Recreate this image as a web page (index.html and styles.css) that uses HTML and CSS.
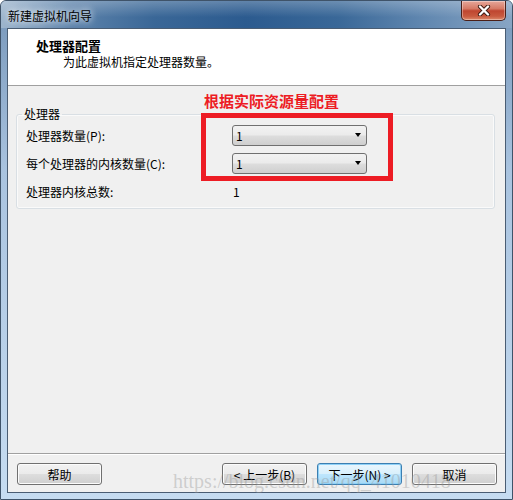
FILE: index.html
```html
<!DOCTYPE html>
<html lang="zh">
<head>
    <meta charset="UTF-8">
    <title>新建虚拟机向导</title>
    <link rel="stylesheet" href="styles.css">
</head>
<body>
    <div class="window">
        <div class="title-bar">
            <span class="title">新建虚拟机向导</span>
            <div class="close-btn">
                <svg width="14" height="11" viewBox="0 0 14 11">
                    <path d="M3 1.5 L11 9.5 M11 1.5 L3 9.5" stroke="#3b1a12" stroke-width="4.2" stroke-linecap="round"/>
                    <path d="M3 1.5 L11 9.5 M11 1.5 L3 9.5" stroke="#ffffff" stroke-width="2.4" stroke-linecap="round"/>
                </svg>
            </div>
        </div>

        <div class="frame">
            <div class="client">
                <div class="header">
                    <div class="header-title">处理器配置</div>
                    <div class="header-sub">为此虚拟机指定处理器数量。</div>
                </div>

                <div class="content">
                    <fieldset class="group">
                        <legend>处理器</legend>
                        <div class="row">
                            <span class="label">处理器数量(P):</span>
                            <div class="combo"><span>1</span><i class="arrow"></i></div>
                        </div>
                        <div class="row">
                            <span class="label">每个处理器的内核数量(C):</span>
                            <div class="combo"><span>1</span><i class="arrow"></i></div>
                        </div>
                        <div class="row">
                            <span class="label">处理器内核总数:</span>
                            <span class="value">1</span>
                        </div>
                    </fieldset>

                    <!-- 截图上的红色标注 -->
                    <div class="note-text">根据实际资源量配置</div>
                    <div class="note-box"></div>
                </div>

                <div class="footer">
                    <button class="btn">帮助</button>
                    <div class="spacer"></div>
                    <button class="btn">&lt; 上一步(B)</button>
                    <button class="btn default">下一步(N) &gt;</button>
                    <button class="btn">取消</button>
                </div>
            </div>
        </div>

        <div class="watermark">https://blog.csdn.net/qq_41010418</div>
    </div>
</body>
</html>
```

FILE: styles.css
```css
body {
    margin: 0;
    font-family: "Noto Sans CJK SC", sans-serif;
    font-size: 12px;
    color: #000;
    background: #fff;
}
.window {
    position: relative;
    width: 513px;
    height: 500px;
    box-sizing: border-box;
    border: 1px solid #3f5369;
    border-radius: 6px 6px 0 0;
    display: flex;
    flex-direction: column;
    overflow: hidden;
    background: linear-gradient(to bottom, #8aa6c4 0%, #a7c1dc 45%, #c3d9ef 100%);
}
.title-bar {
    height: 27px;
    display: flex;
    justify-content: space-between;
    align-items: flex-start;
    padding: 0 6px 0 7px;
    background:
        linear-gradient(to bottom, rgba(255,255,255,0.25), rgba(255,255,255,0) 60%),
        linear-gradient(90deg, #9db5cd 0%, #5d83ab 14%, #3a6797 30%, #2c5b8f 48%, #3a6898 66%, #5f86af 82%, #88a5c4 100%);
}
.title {
    line-height: 28px;
    padding-top: 1px;
    font-size: 12px;
    color: #000;
    text-shadow: 0 0 6px rgba(255,255,255,0.9), 0 0 10px rgba(255,255,255,0.7);
}
.close-btn {
    width: 43px;
    height: 19px;
    display: flex;
    align-items: center;
    justify-content: center;
    border: 1px solid #4b1f17;
    border-top: none;
    border-radius: 0 0 5px 5px;
    background: linear-gradient(to bottom, #e6a79a 0%, #d67a66 40%, #bf4630 52%, #c85a3f 80%, #dd8a6c 100%);
    box-shadow: inset 0 0 0 1px rgba(255,255,255,0.35);
}
.frame {
    flex: 1;
    display: flex;
    padding: 0 6px 6px 6px;
    background: linear-gradient(to bottom, #7e9dbf 0%, #a9c3df 30%, #c6dcf1 100%);
}
.client {
    flex: 1;
    border: 1px solid #4a5d73;
    background: #f0f0f0;
    display: flex;
    flex-direction: column;
}
.header {
    height: 56px;
    box-sizing: border-box;
    background: #fff;
    border-bottom: 1px solid #a0a0a0;
    height: 57px;
    padding: 8px 0 0 28px;
}
.header-title {
    font-size: 13px;
    font-weight: bold;
    line-height: 17px;
}
.header-sub {
    line-height: 16px;
    padding-left: 27px;
}
.content {
    position: relative;
    flex: 1;
    padding: 21px 10px 0 8px;
}
.group {
    margin: 0;
    padding: 0 8px 3px 9px;
    border: 1px solid #d9dfe4;
    border-radius: 3px;
    box-shadow: inset 0 0 0 1px #fafafa;
}
.group legend {
    padding: 0 2px;
    margin-left: -4px;
    line-height: 14px;
    font-size: 12px;
}
.row {
    height: 28px;
    display: flex;
    align-items: center;
}
.label {
    width: 206px;
}
.combo {
    width: 135px;
    height: 21px;
    box-sizing: border-box;
    border: 1px solid #707070;
    border-radius: 3px;
    display: flex;
    align-items: center;
    justify-content: space-between;
    padding: 0 5px 0 3px;
    background: linear-gradient(to bottom, #f2f2f2 0%, #ebebeb 48%, #dddddd 52%, #cfcfcf 100%);
}
.arrow {
    width: 0;
    height: 0;
    border-top: 4px solid #000;
    border-left: 3.5px solid transparent;
    border-right: 3.5px solid transparent;
}
.value {
    padding-left: 1px;
}
.note-text {
    position: absolute;
    left: 196px;
    top: 5px;
    line-height: 20px;
    font-size: 15px;
    font-weight: bold;
    color: #ed1c24;
}
.note-box {
    position: absolute;
    left: 193px;
    top: 27px;
    width: 192px;
    height: 68px;
    box-sizing: border-box;
    border: 5px solid #ed1c24;
}
.footer {
    height: 39px;
    box-sizing: border-box;
    border-top: 1px solid #a0a0a0;
    box-shadow: inset 0 1px 0 #fff;
    padding: 9px 8px 0 9px;
    display: flex;
    align-items: flex-start;
    gap: 10px;
}
.spacer {
    flex: 1;
}
.btn {
    width: 85px;
    height: 22px;
    margin: 0;
    padding: 0;
    font-family: "Noto Sans CJK SC", sans-serif;
    font-size: 12px;
    color: #000;
    border: 1px solid #707070;
    border-radius: 3px;
    background: linear-gradient(to bottom, #f2f2f2 0%, #ebebeb 48%, #dddddd 52%, #cfcfcf 100%);
    box-shadow: inset 0 0 0 1px #fcfcfc;
}
.btn.default {
    border-color: #3c7fb1;
    box-shadow: inset 0 0 0 1px #8fd1f7;
    background: linear-gradient(to bottom, #eaf6fd 0%, #d9f0fc 48%, #bee6fd 52%, #a7d9f5 100%);
}
.watermark {
    position: absolute;
    left: 172px;
    top: 470px;
    font-family: "Liberation Serif", serif;
    font-size: 20px;
    line-height: 20px;
    color: rgba(150,150,150,0.4);
    white-space: nowrap;
}
```
